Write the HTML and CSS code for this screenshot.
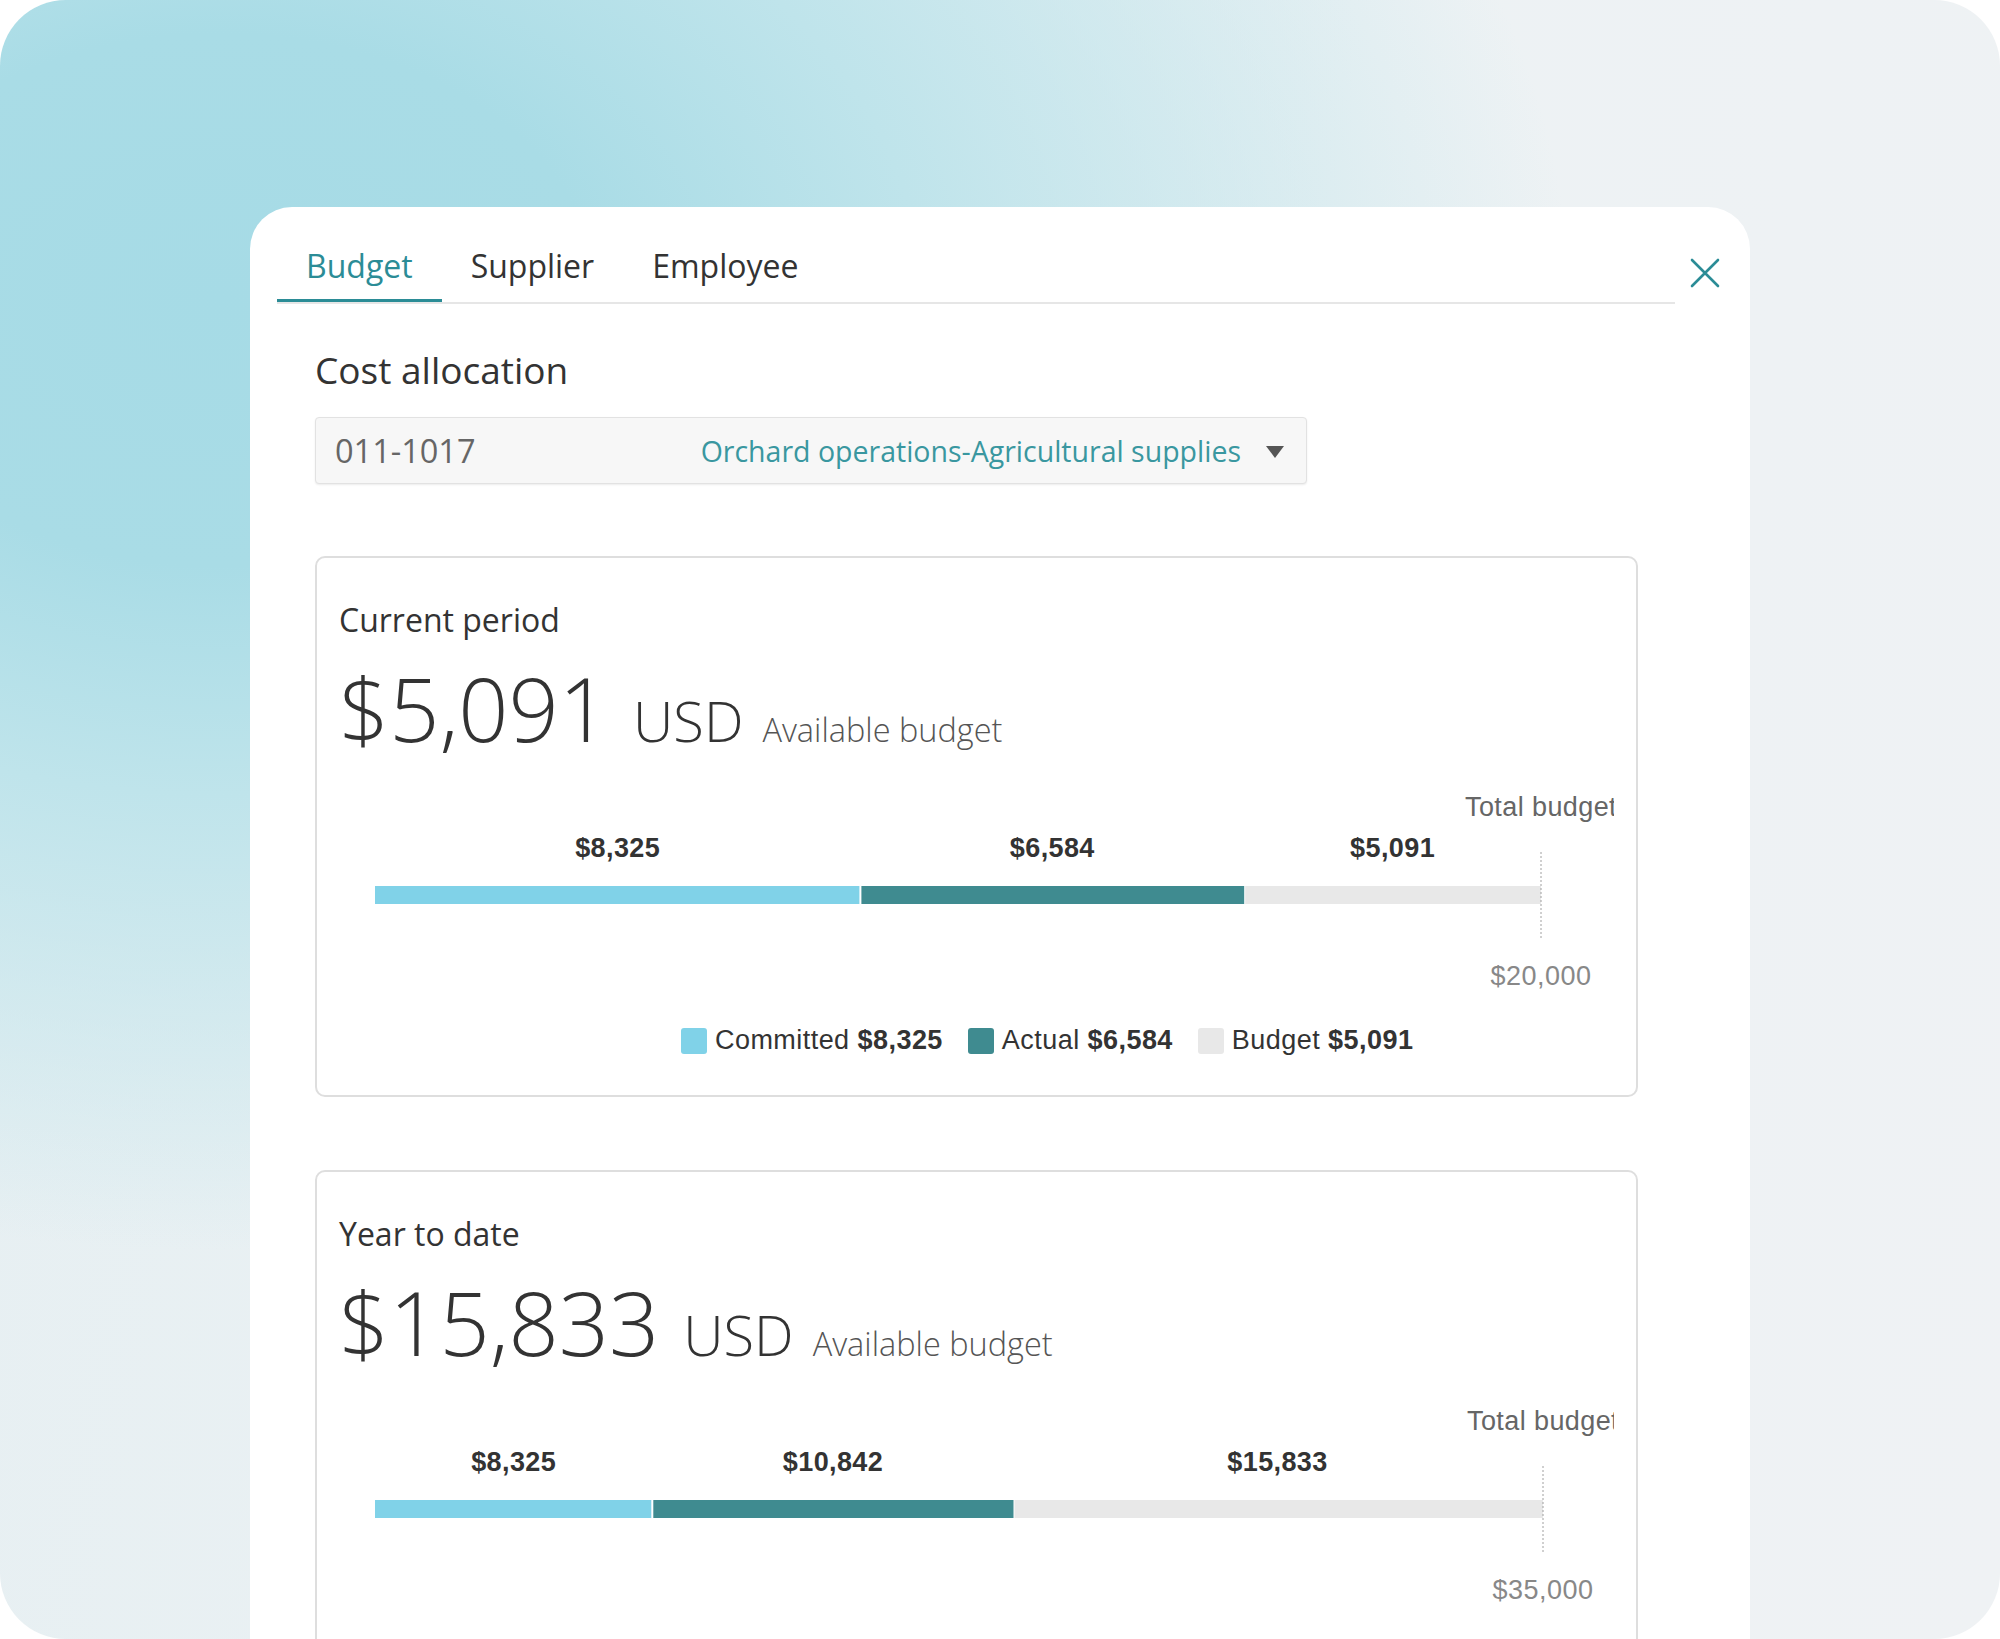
FILE: index.html
```html
<!DOCTYPE html>
<html lang="en">
<head>
<meta charset="utf-8">
<title>Budget</title>
<link rel="stylesheet" href="styles.css">
</head>
<body>
<div class="frame">
  <div class="panel">
    <div class="panel-head">
      <nav class="tabs">
        <div class="tab active">Budget</div>
        <div class="tab">Supplier</div>
        <div class="tab">Employee</div>
      </nav>
      <button class="close" aria-label="Close">
        <svg width="30" height="30" viewBox="0 0 30 30"><path d="M2 2 L28 28 M28 2 L2 28" stroke="#2b8c96" stroke-width="2.6" fill="none" stroke-linecap="round"/></svg>
      </button>
    </div>
    <div class="content">
      <h2 class="section-title">Cost allocation</h2>
      <div class="select">
        <span class="code">011-1017</span>
        <span class="desc">Orchard operations-Agricultural supplies</span>
        <svg class="caret" width="20" height="14" viewBox="0 0 20 14"><polygon points="1,1 19,1 10,13" fill="#555"/></svg>
      </div>

      <section class="card">
        <div class="card-title">Current period</div>
        <div class="amount-row">
          <span class="amount">$5,091</span>
          <span class="currency">USD</span>
          <span class="amount-label">Available budget</span>
        </div>
        <svg class="chart" width="1275" height="240" viewBox="0 0 1275 240">
          <text class="total-label" x="1202" y="56" text-anchor="middle">Total budget</text>
          <text class="val" x="278.7" y="97" text-anchor="middle">$8,325</text>
          <text class="val" x="713.3" y="97" text-anchor="middle">$6,584</text>
          <text class="val" x="1053.6" y="97" text-anchor="middle">$5,091</text>
          <rect x="36" y="126" width="484.4" height="18" fill="#80d2e8"/>
          <rect x="522.4" y="126" width="382.8" height="18" fill="#3f8b90"/>
          <rect x="906.2" y="126" width="295.8" height="18" fill="#e8e8e8"/>
          <line x1="1202" y1="92" x2="1202" y2="180" stroke="#a0a0a0" stroke-width="1" stroke-dasharray="2 2"/>
          <text class="axis" x="1202" y="225" text-anchor="middle">$20,000</text>
        </svg>
        <div class="legend">
          <span class="swatch committed"></span><span class="legend-text">Committed <b>$8,325</b></span>
          <span class="swatch actual"></span><span class="legend-text">Actual <b>$6,584</b></span>
          <span class="swatch budget"></span><span class="legend-text">Budget <b>$5,091</b></span>
        </div>
      </section>

      <section class="card">
        <div class="card-title">Year to date</div>
        <div class="amount-row">
          <span class="amount">$15,833</span>
          <span class="currency">USD</span>
          <span class="amount-label">Available budget</span>
        </div>
        <svg class="chart" width="1275" height="240" viewBox="0 0 1275 240">
          <text class="total-label" x="1204" y="56" text-anchor="middle">Total budget</text>
          <text class="val" x="174.7" y="97" text-anchor="middle">$8,325</text>
          <text class="val" x="494" y="97" text-anchor="middle">$10,842</text>
          <text class="val" x="938.5" y="97" text-anchor="middle">$15,833</text>
          <rect x="36" y="126" width="276.3" height="18" fill="#80d2e8"/>
          <rect x="314.3" y="126" width="360.2" height="18" fill="#3f8b90"/>
          <rect x="675.5" y="126" width="528.5" height="18" fill="#e8e8e8"/>
          <line x1="1204" y1="92" x2="1204" y2="180" stroke="#a0a0a0" stroke-width="1" stroke-dasharray="2 2"/>
          <text class="axis" x="1204" y="225" text-anchor="middle">$35,000</text>
        </svg>
      </section>
    </div>
  </div>
</div>
</body>
</html>
```
FILE: styles.css
```css
* { box-sizing: border-box; }

html, body {
  margin: 0;
  padding: 0;
  background: #ffffff;
}

body {
  font-family: "Open Sans", "Liberation Sans", sans-serif;
  color: #333;
}

.frame {
  width: 2000px;
  height: 1639px;
  border-radius: 66px;
  overflow: hidden;
  padding: 207px 0 0 250px;
  background:
    radial-gradient(ellipse 1350px 950px at 220px 300px, #a6dbe6 0%, #a9dce6 28%, #bfe4eb 52%, rgba(233, 240, 243, 0) 100%),
    linear-gradient(100deg, #e6eff2 0%, #edf2f4 60%, #eff2f4 100%);
}

.panel {
  width: 1500px;
  min-height: 1600px;
  background: #ffffff;
  border-radius: 42px 42px 0 0;
}

.panel-head {
  display: flex;
  align-items: flex-start;
  padding: 37px 30px 0 27px;
}

.tabs {
  flex: 1;
  display: flex;
  border-bottom: 2px solid #e6e6e6;
}

.tab {
  font-size: 32px;
  line-height: 44px;
  padding: 0 29px 11px;
  border-bottom: 3px solid transparent;
  color: #333;
}

.tab.active {
  color: #2b8c96;
  border-bottom-color: #2b8c96;
}

.close {
  width: 30px;
  height: 30px;
  margin: 14px 0 0 15px;
  padding: 0;
  border: 0;
  background: none;
  display: flex;
}

.content {
  padding: 0 112px 0 65px;
}

.section-title {
  margin: 41px 0 0;
  font-size: 37px;
  line-height: 50px;
  font-weight: 400;
  color: #333;
}

.select {
  margin-top: 22px;
  width: 992px;
  height: 67px;
  display: flex;
  align-items: center;
  padding: 0 21px 0 19px;
  background: #f7f7f7;
  border: 1px solid #e2e2e2;
  border-radius: 4px;
  box-shadow: 0 1px 2px rgba(0, 0, 0, 0.08);
}

.code {
  font-size: 32.5px;
  color: #666;
}

.desc {
  margin-left: auto;
  font-size: 28.5px;
  color: #3a97a0;
}

.caret {
  margin-left: 24px;
  margin-top: 2px;
}

.card {
  margin-top: 72px;
  border: 2px solid #dedede;
  border-radius: 10px;
  padding: 40px 22px 39px;
}

.card + .card {
  margin-top: 73px;
}

.card-title {
  font-size: 32px;
  line-height: 44px;
  color: #333;
}

.amount-row {
  margin-top: 22px;
  display: flex;
  align-items: baseline;
  line-height: 1;
}

.amount {
  font-size: 88px;
  font-weight: 300;
  color: #333;
}

.currency {
  margin-left: 24px;
  font-size: 56px;
  font-weight: 300;
  color: #333;
}

.amount-label {
  margin-left: 19px;
  font-size: 32.5px;
  font-weight: 300;
  color: #555;
}

.chart {
  display: block;
  margin-top: 8px;
  overflow: hidden;
}

.chart text {
  font-family: "Liberation Sans", Arial, sans-serif;
}

.total-label {
  font-size: 27px;
  fill: #666;
  letter-spacing: 0.4px;
}

.val {
  font-size: 27px;
  font-weight: 700;
  fill: #333;
  letter-spacing: 0.4px;
}

.axis {
  font-size: 27px;
  fill: #888;
  letter-spacing: 0.5px;
}

.legend {
  margin-top: 25px;
  display: flex;
  align-items: center;
  padding-left: 342px;
  font-family: "Liberation Sans", Arial, sans-serif;
  font-size: 27px;
  letter-spacing: 0.45px;
  color: #333;
}

.swatch {
  width: 26px;
  height: 26px;
  border-radius: 3px;
  margin-right: 8px;
}

.legend-text + .swatch {
  margin-left: 25px;
}

.swatch.committed { background: #80d2e8; }
.swatch.actual { background: #3f8b90; }
.swatch.budget { background: #e8e8e8; }

.legend b {
  font-weight: 700;
}
```
